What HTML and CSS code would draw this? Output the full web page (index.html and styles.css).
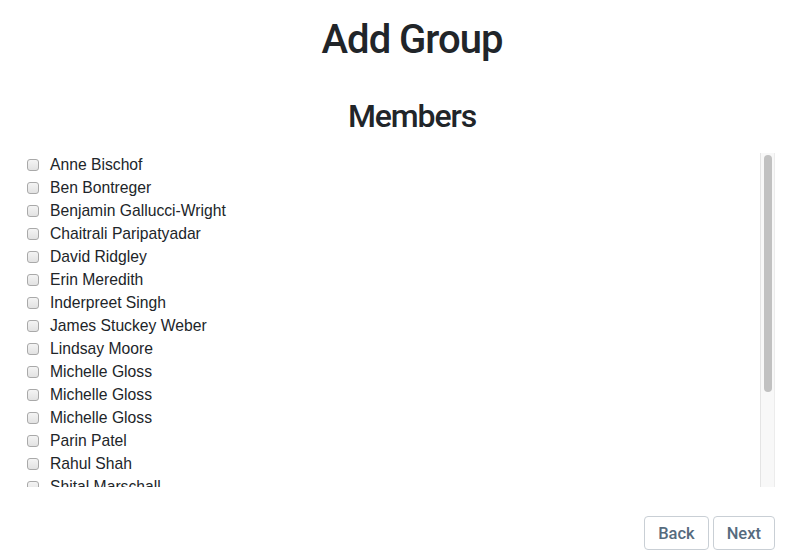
FILE: index.html
```html
<!DOCTYPE html>
<html lang="en">
<head>
<meta charset="utf-8">
<title>Add Group</title>
<link rel="stylesheet" href="styles.css">
</head>
<body>
<main class="page">
  <h1 class="title">Add Group</h1>
  <h2 class="subtitle">Members</h2>
  <div class="list-box">
    <div class="member-list">
      <label class="member"><input type="checkbox" class="check"><span>Anne Bischof</span></label>
      <label class="member"><input type="checkbox" class="check"><span>Ben Bontreger</span></label>
      <label class="member"><input type="checkbox" class="check"><span>Benjamin Gallucci-Wright</span></label>
      <label class="member"><input type="checkbox" class="check"><span>Chaitrali Paripatyadar</span></label>
      <label class="member"><input type="checkbox" class="check"><span>David Ridgley</span></label>
      <label class="member"><input type="checkbox" class="check"><span>Erin Meredith</span></label>
      <label class="member"><input type="checkbox" class="check"><span>Inderpreet Singh</span></label>
      <label class="member"><input type="checkbox" class="check"><span>James Stuckey Weber</span></label>
      <label class="member"><input type="checkbox" class="check"><span>Lindsay Moore</span></label>
      <label class="member"><input type="checkbox" class="check"><span>Michelle Gloss</span></label>
      <label class="member"><input type="checkbox" class="check"><span>Michelle Gloss</span></label>
      <label class="member"><input type="checkbox" class="check"><span>Michelle Gloss</span></label>
      <label class="member"><input type="checkbox" class="check"><span>Parin Patel</span></label>
      <label class="member"><input type="checkbox" class="check"><span>Rahul Shah</span></label>
      <label class="member"><input type="checkbox" class="check"><span>Shital Marschall</span></label>
    </div>
    <div class="scrollbar"><div class="thumb"></div></div>
  </div>
  <div class="actions">
    <button class="btn" type="button">Back</button>
    <button class="btn" type="button">Next</button>
  </div>
</main>
</body>
</html>
```

FILE: styles.css
```css
* { box-sizing: border-box; }

html, body {
  margin: 0;
  padding: 0;
  background: #fff;
}

body {
  font-family: "Liberation Sans", Arial, sans-serif;
  color: #212529;
  font-size: 15.7px;
}

.page {
  padding: 16px 37px 0 22px;
}

.title {
  margin: 0;
  padding-left: 27px;
  text-align: center;
  font-family: Roboto, "Liberation Sans", sans-serif;
  font-size: 40px;
  font-weight: 500;
  line-height: 48px;
  letter-spacing: -1px;
}

.subtitle {
  margin: 33px 0 18px;
  padding-left: 27px;
  text-align: center;
  font-family: Roboto, "Liberation Sans", sans-serif;
  font-size: 32px;
  font-weight: 500;
  line-height: 38px;
  letter-spacing: -1.1px;
}

.list-box {
  display: flex;
  height: 334px;
}

.member-list {
  flex: 1;
  overflow: hidden;
  display: flex;
  flex-direction: column;
}

.scrollbar {
  width: 15px;
  flex: none;
  background: #f8f8f8;
  border-left: 1px solid #e4e4e4;
  border-right: 1px solid #ececec;
  padding: 2px 2px 0 3px;
}

.thumb {
  width: 8px;
  height: 237px;
  background: #c1c1c1;
  border-radius: 4px;
}

.member {
  display: flex;
  align-items: center;
  gap: 11px;
  height: 23px;
  line-height: 23px;
  padding-left: 5px;
  flex: none;
}

.check {
  -webkit-appearance: none;
  appearance: none;
  margin: 0;
  width: 12px;
  height: 12px;
  border: 1px solid #a9a9a9;
  border-radius: 3px;
  background: linear-gradient(#f4f4f4, #e2e2e2);
}

.actions {
  display: flex;
  justify-content: flex-end;
  gap: 4px;
  margin-top: 29px;
}

.btn {
  font-family: Roboto, "Liberation Sans", sans-serif;
  font-size: 16.5px;
  font-weight: 500;
  color: #566b7e;
  background: #fff;
  border: 1px solid #c9cfd5;
  border-radius: 4px;
  height: 34px;
  padding: 0 13px;
}
```
